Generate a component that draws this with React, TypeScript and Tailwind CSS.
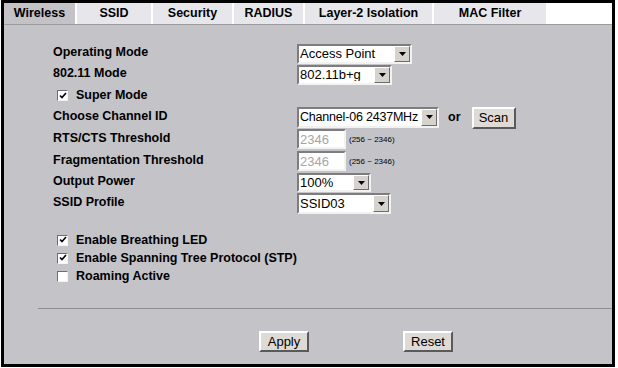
import React from "react";

const tabs = [
  { name: "Wireless", w: "w-[73px]", active: true },
  { name: "SSID", w: "w-[76px]" },
  { name: "Security", w: "w-[81px]" },
  { name: "RADIUS", w: "w-[71px]" },
  { name: "Layer-2 Isolation", w: "w-[129px]" },
  { name: "MAC Filter", w: "w-[114px]" },
];

// classic sunken select box with a raised arrow button
const Select = ({ value, w, h = "h-[20px]", text = "text-[13px]" }: { value: string; w: string; h?: string; text?: string }) => (
  <div className={`${w} ${h} flex items-center bg-white border-2 border-t-[#7d7d7d] border-l-[#7d7d7d] border-b-[#f2f2f2] border-r-[#f2f2f2]`}>
    <span className={`flex-1 pl-[1px] ${text} leading-none text-black whitespace-nowrap overflow-hidden`}>{value}</span>
    <span className="w-[16px] h-full flex items-center justify-center bg-[#d6d3ce] border border-t-white border-l-white border-b-[#6d6d6d] border-r-[#6d6d6d]">
      <svg width="7" height="4" viewBox="0 0 7 4">
        <path d="M0 0h7L3.5 4z" fill="#000" />
      </svg>
    </span>
  </div>
);

const Input = ({ value }: { value: string }) => (
  <div className="flex items-center gap-[3px]">
    <div className="w-[49px] h-[20px] flex items-center bg-white border-2 border-t-[#7d7d7d] border-l-[#7d7d7d] border-b-[#f2f2f2] border-r-[#f2f2f2] pl-[1px] text-[13px] leading-none text-[#a6a6a6]">
      {value}
    </div>
    <span className="text-[8px] text-black pt-[2px]">(256 ~ 2346)</span>
  </div>
);

const Check = ({ checked }: { checked: boolean }) => (
  <span className="w-[11px] h-[11px] flex items-center justify-center bg-white border border-t-[#6d6d6d] border-l-[#6d6d6d] border-b-[#f4f4f4] border-r-[#f4f4f4]">
    {checked && (
      <svg width="8" height="8" viewBox="0 0 8 8">
        <path d="M1 3.5l2 2 4-4.5" stroke="#000" strokeWidth="1.6" fill="none" />
      </svg>
    )}
  </span>
);

const Button = ({ label }: { label: string }) => (
  <button className="w-[50px] h-[21px] bg-[#dedbd6] border-2 border-t-white border-l-white border-b-[#5a5a5a] border-r-[#5a5a5a] text-[13px] leading-none text-black">
    {label}
  </button>
);

const rows: { label: string; h: string; field: React.ReactNode }[] = [
  { label: "Operating Mode", h: "h-[21px]", field: <Select value="Access Point" w="w-[115px]" /> },
  { label: "802.11 Mode", h: "h-[21px]", field: <Select value="802.11b+g" w="w-[95px]" /> },
  { label: "", h: "h-[21px]", field: null },
  {
    label: "Choose Channel ID",
    h: "h-[22px]",
    field: (
      <div className="flex items-center">
        <Select value="Channel-06 2437MHz" w="w-[142px]" h="h-[21px]" text="text-[12.5px] tracking-[-0.2px]" />
        <span className="ml-[9px] font-bold text-[12.5px] text-black">or</span>
        <span className="ml-[11px]">
          <button className="w-[44px] h-[22px] bg-[#dedbd6] border-2 border-t-white border-l-white border-b-[#5a5a5a] border-r-[#5a5a5a] text-[13px] leading-none text-black">
            Scan
          </button>
        </span>
      </div>
    ),
  },
  { label: "RTS/CTS Threshold", h: "h-[22px]", field: <Input value="2346" /> },
  { label: "Fragmentation Threshold", h: "h-[22px]", field: <Input value="2346" /> },
  { label: "Output Power", h: "h-[21px]", field: <Select value="100%" w="w-[74px]" h="h-[19px]" /> },
  { label: "SSID Profile", h: "h-[21px]", field: <Select value="SSID03" w="w-[94px]" h="h-[21px]" /> },
];

const options = [
  { label: "Enable Breathing LED", checked: true },
  { label: "Enable Spanning Tree Protocol (STP)", checked: true },
  { label: "Roaming Active", checked: false },
];

export default function App() {
  return (
    <div className="w-[618px] h-[368px] bg-white" style={{ fontFamily: '"Liberation Sans", Arial, sans-serif' }}>
      <div className="ml-[1px] w-[614px] h-[367px] border-[3px] border-black flex flex-col bg-[#c4c3c8]">
        {/* Tabs */}
        <div className="h-[21px] flex bg-white">
          {tabs.map((t) => (
            <div
              key={t.name}
              className={`${t.w} h-full flex items-center justify-center border-r-2 border-white text-[12.5px] font-bold text-black ${t.active ? "bg-[#c3c2c7]" : "bg-[#e7e7eb]"}`}
            >
              {t.name}
            </div>
          ))}
          <div className="flex-1 bg-white" />
        </div>
        <div className="h-[1px] bg-[#9b9b9f]" />

        {/* Settings */}
        <div className="pt-[18px] pl-[49px] flex flex-col">
          {rows.map((r, i) => (
            <div key={i} className={`${r.h} flex items-center`}>
              {r.label ? (
                <span className="w-[244px] pb-[2px] text-[12.5px] font-bold text-black">{r.label}</span>
              ) : (
                <span className="w-[244px] flex items-center gap-[8px] pl-[4px]">
                  <Check checked />
                  <span className="text-[12.5px] font-bold text-black">Super Mode</span>
                </span>
              )}
              {r.field}
            </div>
          ))}
        </div>

        <div className="mt-[17px] pl-[53px] flex flex-col">
          {options.map((o) => (
            <div key={o.label} className="h-[18px] flex items-center gap-[8px]">
              <Check checked={o.checked} />
              <span className="text-[12.5px] font-bold text-black">{o.label}</span>
            </div>
          ))}
        </div>

        <div className="mt-[23px] ml-[34px] h-[1px] bg-[#8e8e92]" />

        <div className="mt-[22px] pl-[255px] flex gap-[94px]">
          <Button label="Apply" />
          <Button label="Reset" />
        </div>
      </div>
    </div>
  );
}
